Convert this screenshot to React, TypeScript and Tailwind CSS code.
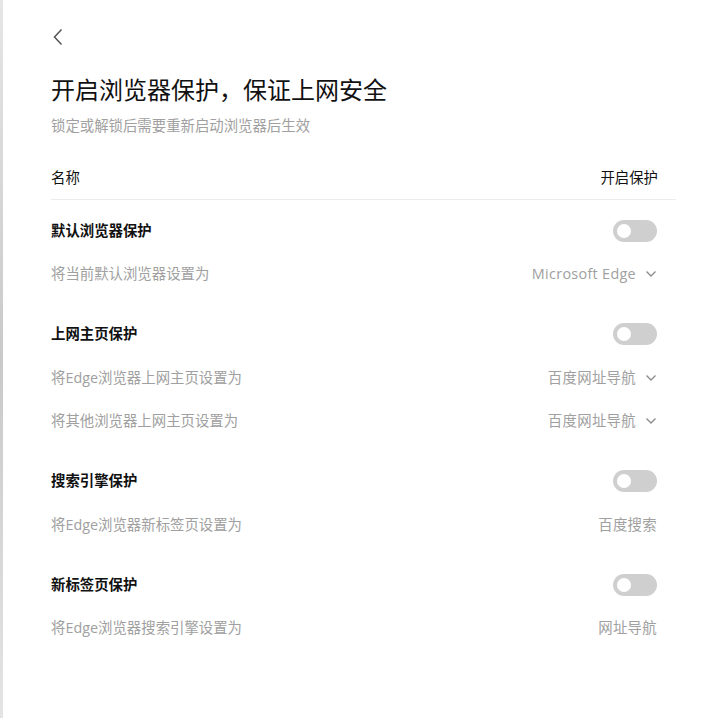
import React from 'react';

const font = { fontFamily: '"Open Sans", "Noto Sans CJK SC", sans-serif' };

function Toggle() {
  return (
    <div className="w-[44px] h-[22px] rounded-full bg-[#cfcfcf] flex items-center px-[4px]">
      <div className="w-[14px] h-[14px] rounded-full bg-white" />
    </div>
  );
}

function Chevron() {
  return (
    <svg width="12" height="8" viewBox="0 0 12 8" className="ml-[9px]">
      <path d="M1.5 1.5 L6 6 L10.5 1.5" fill="none" stroke="#8a8a8a" strokeWidth="1.3" />
    </svg>
  );
}

interface Row {
  label: string;
  value: string;
  dropdown?: boolean;
}

interface Section {
  title: string;
  rows: Row[];
}

const sections: Section[] = [
  { title: '默认浏览器保护', rows: [{ label: '将当前默认浏览器设置为', value: 'Microsoft Edge', dropdown: true }] },
  {
    title: '上网主页保护',
    rows: [
      { label: '将Edge浏览器上网主页设置为', value: '百度网址导航', dropdown: true },
      { label: '将其他浏览器上网主页设置为', value: '百度网址导航', dropdown: true },
    ],
  },
  { title: '搜索引擎保护', rows: [{ label: '将Edge浏览器新标签页设置为', value: '百度搜索' }] },
  { title: '新标签页保护', rows: [{ label: '将Edge浏览器搜索引擎设置为', value: '网址导航' }] },
];

export default function App() {
  return (
    <div className="w-[720px] h-[718px] flex bg-white overflow-hidden" style={font}>
      {/* window behind */}
      <div className="w-[3px] h-full bg-gradient-to-b from-[#e6e6e6] via-[#c9c9c9] to-[#e4e4e4]" />

      <div className="flex-1 pl-[48px] pr-[44px]">
        {/* back */}
        <div className="h-[74px] pt-[28px]">
          <svg width="12" height="18" viewBox="0 0 12 18" className="ml-[1px]">
            <path d="M9.5 1.5 L2.5 9 L9.5 16.5" fill="none" stroke="#555" strokeWidth="1.5" />
          </svg>
        </div>

        <h1 className="text-[24px] leading-[32px] text-[#111]">开启浏览器保护，保证上网安全</h1>
        <p className="mt-[10px] text-[14.4px] leading-[20px] text-[#a0a0a0]">锁定或解锁后需要重新启动浏览器后生效</p>

        <div className="mt-[22px] h-[42px] pb-[1px] flex items-center justify-between text-[14.4px] text-[#111] border-b border-[#ececec] pr-[18px]">
          <span>名称</span>
          <span>开启保护</span>
        </div>

        <div className="pt-[9px] pr-[19px] flex flex-col gap-[16.5px]">
          {sections.map((s) => (
            <div key={s.title}>
              <div className="h-[43.5px] flex items-center justify-between">
                <span className="text-[14.4px] font-bold text-[#111]">{s.title}</span>
                <Toggle />
              </div>
              {s.rows.map((r) => (
                <div key={r.label} className="h-[43.5px] flex items-center justify-between text-[14.4px] text-[#a0a0a0]">
                  <span>{r.label}</span>
                  <span className="flex items-center tracking-[0.3px]">
                    {r.value}
                    {r.dropdown && <Chevron />}
                  </span>
                </div>
              ))}
            </div>
          ))}
        </div>
      </div>
    </div>
  );
}
